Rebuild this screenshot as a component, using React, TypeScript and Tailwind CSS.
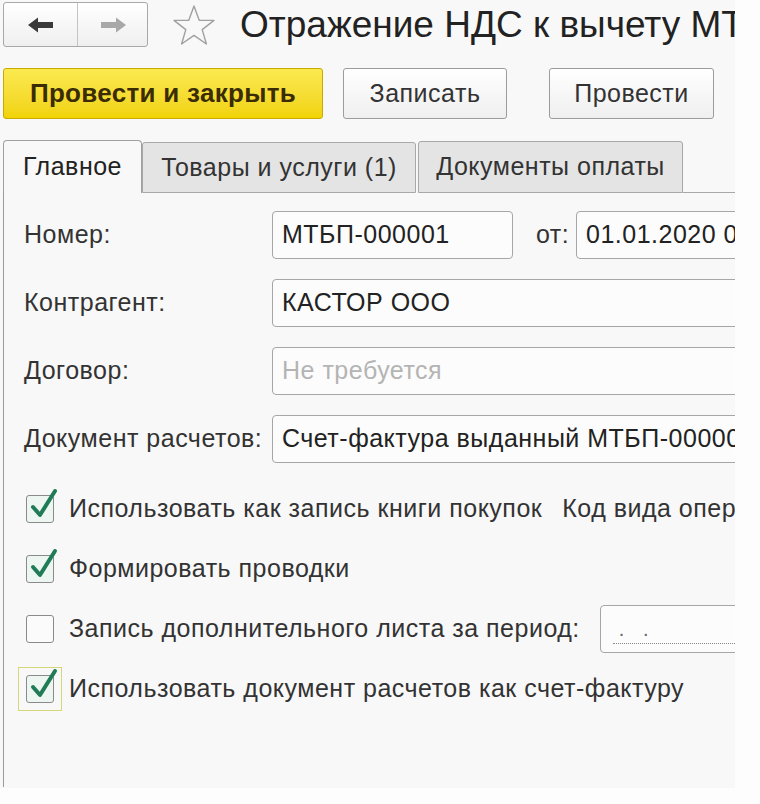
import React from "react";

const font = { fontFamily: '"Liberation Sans", Arial, sans-serif' };

function NavBox() {
  return (
    <div className="flex h-[45px] w-[145px] shrink-0 rounded-[3px] border border-[#a8a8a8] bg-gradient-to-b from-white to-[#efefef]">
      <div className="flex w-[74px] items-center justify-center border-r border-[#c4c4c4]">
        <svg width="28" height="18" viewBox="0 0 28 18">
          <path d="M1 9 L11 1.5 L11 6 L26 6 L26 12 L11 12 L11 16.5 Z" fill="#3a3a3a" />
        </svg>
      </div>
      <div className="flex flex-1 items-center justify-center">
        <svg width="28" height="18" viewBox="0 0 28 18">
          <path d="M27 9 L17 1.5 L17 6 L2 6 L2 12 L17 12 L17 16.5 Z" fill="#a8a8a8" />
        </svg>
      </div>
    </div>
  );
}

function Star() {
  return (
    <svg width="44" height="42" viewBox="0 0 44 42" className="shrink-0">
      <polygon
        points="22,2 27.2,16.2 42,16.4 30.2,25.6 34.4,40 22,31.4 9.6,40 13.8,25.6 2,16.4 16.8,16.2"
        fill="none"
        stroke="#a0a0a0"
        strokeWidth="1.4"
        strokeLinejoin="round"
      />
    </svg>
  );
}

function Field({ label, children }: { label: string; children: React.ReactNode }) {
  return (
    <div className="flex h-[48px] items-center">
      <div className="w-[248px] shrink-0 whitespace-nowrap text-[25px] tracking-[0.5px] text-[#333]">{label}</div>
      {children}
    </div>
  );
}

function Input({ text, muted, className }: { text: string; muted?: boolean; className?: string }) {
  return (
    <div
      className={`flex h-[48px] shrink-0 items-center overflow-hidden whitespace-nowrap rounded-l-[4px] border border-[#a6a6a6] bg-[#fcfcfc] pl-[9px] text-[25px] tracking-[0.5px] ${
        muted ? "text-[#b4b4b4]" : "text-[#222]"
      } ${className ?? ""}`}
    >
      {text}
    </div>
  );
}

function Check({ checked, focused }: { checked: boolean; focused?: boolean }) {
  return (
    <div
      className={`flex h-[44px] w-[44px] shrink-0 items-center justify-center ${
        focused ? "border border-[#d6d67a]" : "border border-transparent"
      }`}
    >
      <div
        className={`relative h-[28px] w-[28px] rounded-[3px] border border-[#8a8a8a] ${
          checked ? "bg-[#eef6f1]" : "bg-[#fbfbfb]"
        }`}
      >
        {checked && (
          <svg className="absolute left-[2px] top-[-8px]" width="30" height="34" viewBox="0 0 30 34">
            <path
              d="M4 19 L11 27 L26 3"
              fill="none"
              stroke="#1f7c56"
              strokeWidth="4"
              strokeLinecap="round"
              strokeLinejoin="round"
            />
          </svg>
        )}
      </div>
    </div>
  );
}

function CheckRow({
  checked,
  focused,
  children,
}: {
  checked: boolean;
  focused?: boolean;
  children: React.ReactNode;
}) {
  return (
    <div className="flex h-[48px] items-center">
      <div className="-ml-[6px]">
        <Check checked={checked} focused={focused} />
      </div>
      <div className="ml-[7px] flex items-center whitespace-nowrap text-[25px] tracking-[0.5px] text-[#333]">
        {children}
      </div>
    </div>
  );
}

export default function App() {
  return (
    <div className="min-h-screen w-[760px] bg-[#fdfdfd]" style={font}>
      <div className="h-[788px] w-[735px] overflow-hidden bg-[#f8f8f8]">
        {/* Header */}
        <div className="flex items-center pl-[3px] pt-[2px]">
          <NavBox />
          <div className="ml-[24px]">
            <Star />
          </div>
          <div className="ml-[24px] whitespace-nowrap text-[37px] leading-none text-[#222]">
            Отражение НДС к вычету МТБП-000001 от 01.01.2020
          </div>
        </div>

        {/* Command bar */}
        <div className="mt-[21px] flex items-center pl-[3px]">
          <button className="flex h-[51px] w-[320px] shrink-0 items-center justify-center rounded-[3px] border border-[#c9ab00] bg-gradient-to-b from-[#fbe94e] to-[#f1d300] text-[26px] font-bold tracking-[0.3px] text-[#3b2c04]">
            Провести и закрыть
          </button>
          <button className="ml-[20px] flex h-[51px] w-[164px] shrink-0 items-center justify-center rounded-[3px] border border-[#9c9c9c] bg-gradient-to-b from-white to-[#efefef] text-[25px] tracking-[0.5px] text-[#333]">
            Записать
          </button>
          <button className="ml-[42px] flex h-[51px] w-[165px] shrink-0 items-center justify-center rounded-[3px] border border-[#9c9c9c] bg-gradient-to-b from-white to-[#efefef] text-[25px] tracking-[0.5px] text-[#333]">
            Провести
          </button>
        </div>

        {/* Tabs */}
        <div className="mt-[21px] flex items-end pl-[3px]">
          <div className="flex h-[53px] w-[139px] shrink-0 items-center justify-center rounded-t-[4px] border border-b-0 border-[#a0a0a0] bg-[#f8f8f8] text-[25px] tracking-[0.5px] text-[#222]">
            Главное
          </div>
          <div className="flex h-[51px] w-[274px] shrink-0 items-center justify-center rounded-t-[3px] border border-[#a8a8a8] bg-[#e4e4e4] text-[25px] tracking-[0.5px] text-[#333]">
            Товары и услуги (1)
          </div>
          <div className="ml-[2px] flex h-[52px] w-[265px] shrink-0 items-center justify-center rounded-t-[3px] border border-[#a8a8a8] bg-[#e4e4e4] text-[25px] tracking-[0.5px] text-[#333]">
            Документы оплаты
          </div>
          <div className="h-[1px] flex-1 bg-[#a8a8a8]" />
        </div>

        {/* Panel */}
        <div className="ml-[3px] flex h-[594px] flex-col border-l border-[#9a9a9a] pl-[20px] pt-[18px]">
          <div className="flex flex-col gap-[20px]">
            <Field label="Номер:">
              <Input text="МТБП-000001" className="w-[241px] rounded-r-[4px]" />
              <div className="ml-[23px] w-[40px] shrink-0 text-[25px] tracking-[0.5px] text-[#333]">от:</div>
              <Input text="01.01.2020 0:00:00" className="w-[200px]" />
            </Field>
            <Field label="Контрагент:">
              <Input text="КАСТОР ООО" className="w-[500px]" />
            </Field>
            <Field label="Договор:">
              <Input text="Не требуется" muted className="w-[500px]" />
            </Field>
            <Field label="Документ расчетов:">
              <Input text="Счет-фактура выданный МТБП-000007 от 01.01.2020" className="w-[500px]" />
            </Field>
          </div>

          <div className="mt-[22px] flex flex-col gap-[12px]">
            <CheckRow checked>
              <span>Использовать как запись книги покупок</span>
              <span className="ml-[20px]">Код вида операции:</span>
            </CheckRow>
            <CheckRow checked>
              <span>Формировать проводки</span>
            </CheckRow>
            <CheckRow checked={false}>
              <span>Запись дополнительного листа за период:</span>
              <div className="ml-[20px] flex h-[48px] w-[200px] shrink-0 items-center rounded-l-[4px] border border-[#a6a6a6] bg-[#fcfcfc] pl-[12px]">
                <div className="flex h-[30px] w-full items-center border-b border-dotted border-[#888] text-[20px] text-[#666]">
                  &nbsp;.&nbsp;&nbsp;&nbsp;.
                </div>
              </div>
            </CheckRow>
            <CheckRow checked focused>
              <span>Использовать документ расчетов как счет-фактуру</span>
            </CheckRow>
          </div>
        </div>
      </div>
    </div>
  );
}
